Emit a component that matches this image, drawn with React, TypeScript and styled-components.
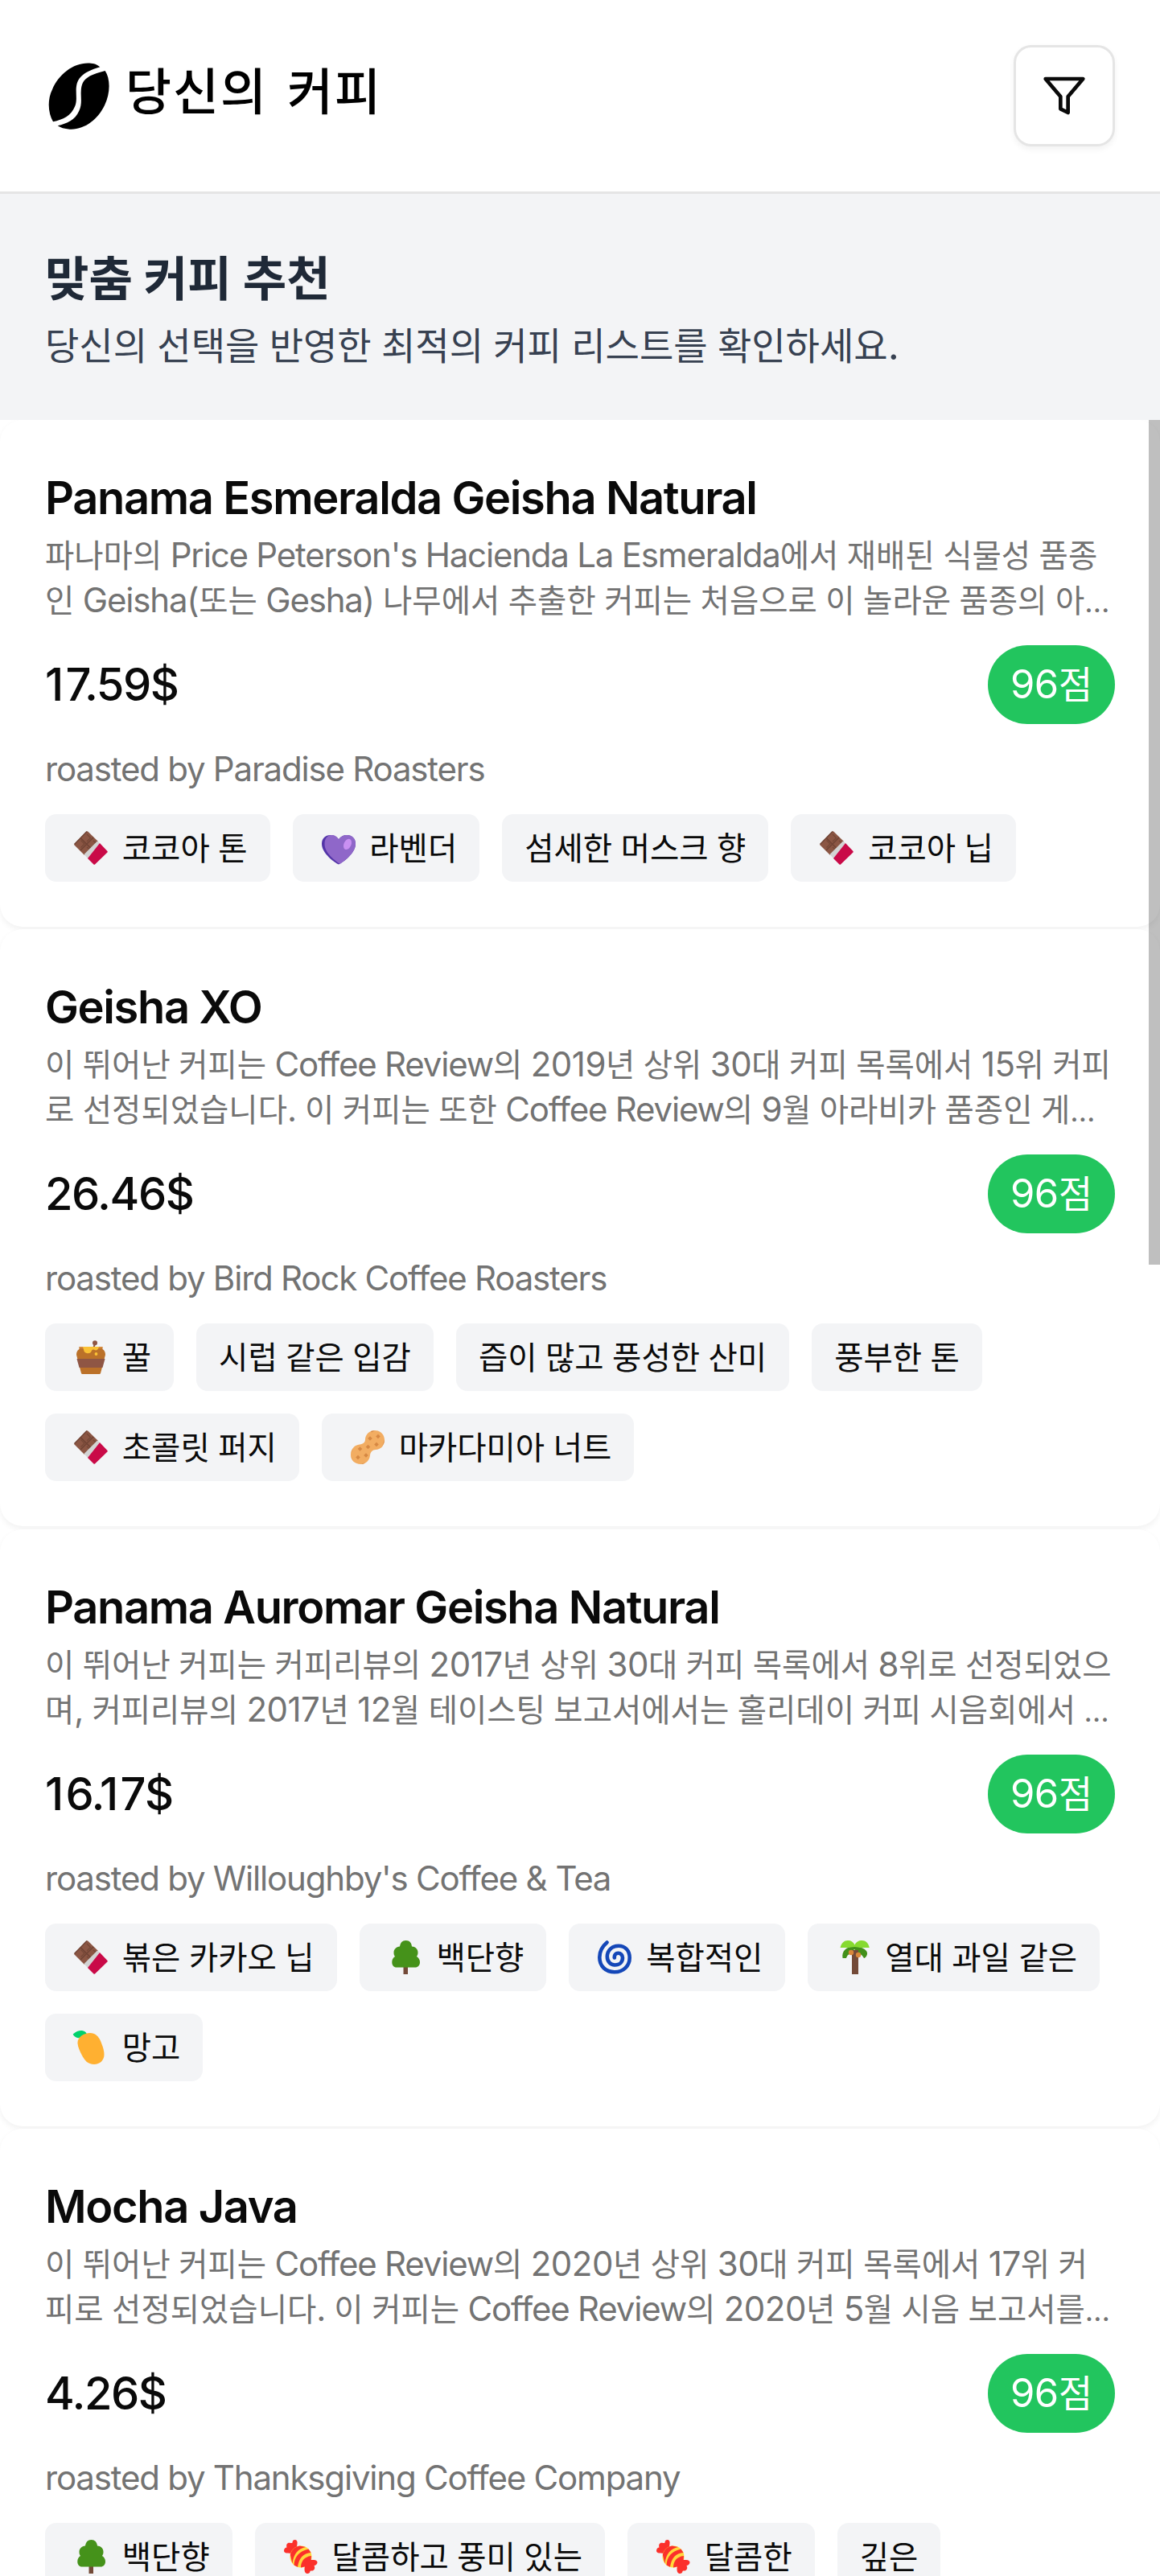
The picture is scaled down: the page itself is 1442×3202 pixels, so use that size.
import React from "react";
import styled, { createGlobalStyle } from "styled-components";

const LATIN = `Inter, "Noto Sans CJK KR", sans-serif`;
const HANGUL = `"Noto Sans CJK KR", Inter, sans-serif`;

const GlobalStyle = createGlobalStyle`
  *, *::before, *::after { box-sizing: border-box; }
  body {
    margin: 0;
    background: #ffffff;
    color: #0a0a0a;
    font-family: ${LATIN};
    -webkit-font-smoothing: antialiased;
  }
  h1, h2, p, ul { margin: 0; padding: 0; }
`;

const Screen = styled.div`
  display: flex;
  flex-direction: column;
  width: 1442px;
  height: 3202px;
  overflow: hidden;
  background: #ffffff;
`;

const Header = styled.header`
  display: flex;
  flex: none;
  align-items: center;
  justify-content: space-between;
  height: 241px;
  padding: 0 56px;
  border-bottom: 3px solid #e5e5e5;
`;

const Brand = styled.div`
  display: flex;
  align-items: center;
  gap: 20px;
  padding-left: 4px;
`;

const BeanMark = styled.svg`
  display: block;
  width: 76px;
  height: 83px;
`;

const Wordmark = styled.span`
  font-family: ${HANGUL};
  font-size: 62px;
  font-weight: 500;
  line-height: 84px;
  letter-spacing: 2px;
  word-spacing: 8px;
  color: #000000;
  white-space: nowrap;
  margin-top: -18px;
`;

const FilterButton = styled.button`
  display: flex;
  align-items: center;
  justify-content: center;
  width: 126px;
  height: 126px;
  padding: 0;
  border: 3px solid #e5e5e5;
  border-radius: 22px;
  background: #ffffff;
  box-shadow: 0 3.5px 7px rgba(0, 0, 0, 0.05);
  color: #0a0a0a;
`;

const Intro = styled.section`
  flex: none;
  height: 280.5px;
  padding: 56px;
  background: #f3f4f6;
`;

const IntroTitle = styled.h1`
  font-size: 63px;
  font-weight: 600;
  line-height: 96px;
  height: 98px;
  color: #1f2937;
  white-space: nowrap;
`;

const IntroText = styled.p`
  font-size: 49px;
  line-height: 70px;
  color: #374151;
  white-space: nowrap;
`;

const ListArea = styled.main`
  position: relative;
  flex: 1;
  min-height: 0;
  overflow: hidden;
`;

const CardList = styled.div`
  display: flex;
  flex-direction: column;
  gap: 3.5px;
`;

const ScrollThumb = styled.div`
  position: absolute;
  top: 0;
  right: 0;
  width: 14px;
  height: 1050px;
  background: rgba(0, 0, 0, 0.25);
`;

const Card = styled.article`
  display: flex;
  flex-direction: column;
  gap: 28px;
  padding: 56px;
  border-radius: 28px;
  background: #ffffff;
  box-shadow: 0 3.5px 7px rgba(0, 0, 0, 0.05);
`;

const CardName = styled.h2`
  font-size: 56px;
  font-weight: 600;
  line-height: 83px;
  height: 84px;
  letter-spacing: -0.0245em;
  white-space: nowrap;
`;

const Description = styled.p`
  font-size: 42px;
  line-height: 56px;
  color: #737373;
`;

const DescriptionLine = styled.span`
  display: block;
  height: 56px;
  white-space: nowrap;
`;

const PriceRow = styled.div`
  display: flex;
  align-items: center;
  justify-content: space-between;
  height: 98px;
`;

const PriceTag = styled.span`
  font-size: 56px;
  font-weight: 500;
  line-height: 84px;
  letter-spacing: -0.026em;
`;

const DigitOne = styled.span`
  margin-right: 0.065em;
`;

const Score = styled.span`
  display: flex;
  align-items: center;
  height: 98px;
  padding: 0 28px;
  border-radius: 49px;
  background: #22c55e;
  color: #ffffff;
  font-size: 49px;
  line-height: 70px;
`;

const Roaster = styled.p`
  height: 56px;
  font-size: 42px;
  line-height: 56px;
  color: #737373;
  white-space: nowrap;
`;

const Notes = styled.ul`
  display: flex;
  flex-wrap: wrap;
  gap: 28px;
  list-style: none;
`;

const Note = styled.li`
  display: flex;
  align-items: center;
  height: 84px;
  padding: 0 28px;
  border-radius: 14px;
  background: #f3f4f6;
  font-size: 42px;
  line-height: 56px;
  white-space: nowrap;
`;

const NoteIcon = styled.svg`
  display: block;
  width: 42px;
  height: 42px;
  margin: 0 17.800px 0 8px;
  overflow: visible;
`;

const Run = styled.span`
  letter-spacing: -0.012em;
  word-spacing: -0.02em;
`;

const HangulRun = styled.span`
  font-family: ${HANGUL};
  font-size: 0.94em;
  letter-spacing: 0;
  line-height: 1;
`;

const LatinRun = styled.span`
  letter-spacing: -0.028em;
`;

const Ellipsis = styled.span`
  font-size: 0.86em;
  line-height: 1;
`;

/* Hangul is set slightly smaller than Latin so both scripts sit at one optical size. */
function Text({ children }: { children: string }) {
  const parts = children.split(/([\uAC00-\uD7A3]+|[A-Za-z']+|…)/).filter(Boolean);
  return (
    <Run>
      {parts.map((part, i) => {
        if (/[\uAC00-\uD7A3]/.test(part)) return <HangulRun key={i}>{part}</HangulRun>;
        if (/[A-Za-z]/.test(part)) return <LatinRun key={i}>{part}</LatinRun>;
        if (part === "…") return <Ellipsis key={i}>{part}</Ellipsis>;
        return part;
      })}
    </Run>
  );
}

/* The figure 1 gets a little extra room so prices keep an even rhythm. */
function Price({ children }: { children: string }) {
  return (
    <PriceTag>
      {children.split(/(1)/).filter(Boolean).map((part, i) =>
        part === "1" ? <DigitOne key={i}>1</DigitOne> : part
      )}
    </PriceTag>
  );
}

type IconName =
  | "chocolate" | "heart" | "honey" | "peanut" | "tree"
  | "cyclone" | "palm" | "mango" | "candy";

const icons: Record<IconName, React.ReactNode> = {
  chocolate: (
    <>
      <path d="M16 0.4Q16.600 0 17.200 0.500L30 13 13 30 0.500 17.500Q0 16.800 0.500 16Z" fill="#8b5644" />
      <path d="M8 8.500 21.500 22M24 8 8 24M16 0.500 0.500 16.500" stroke="#6f4334" strokeWidth="1.500" fill="none" />
      <path d="M16 4 20.500 8.500 16 13M8.500 11.500 13 16 8.500 20.500M24 12 28 15.500 23 20M16 20 20.500 24 15 28" stroke="#744736" strokeWidth="1.200" fill="none" />
      <path d="M29 12.500 32 15 17.500 34.500 12.500 29Z" fill="#d3d3d3" />
      <path d="M32 15 41.500 25Q42 25.700 41.500 26.400L26 41.500Q25.300 42.200 24.500 41.500L17 34Z" fill="#c90a48" />
    </>
  ),
  heart: (
    <>
      <path d="M21 41.500C17 40 0 28 0 16 0 9 4.500 5 10.500 5 15 5 19 7 21 10.500 23 7 27 5 31.500 5 37.500 5 42 9 42 16 42 28 25 40 21 41.500Z" fill="#5334a8" />
      <path d="M22.500 41C18 37.500 3.500 28 3.500 16 3.500 9 7.500 5 12 5 16 5 19.500 7 21 10.500 23 7 27 5 31.500 5 37.500 5 42 9 42 16 42 27.500 27 38 22.500 41Z" fill="#8f67c9" />
      <ellipse cx="32" cy="16.300" rx="4.500" ry="7" transform="rotate(25 32 16.300)" fill="#c990f2" />
    </>
  ),
  honey: (
    <>
      <path d="M25 3.500H27.500L25.500 9H23.500Z" fill="#8f5644" />
      <circle cx="26" cy="3.300" r="3" fill="#8f5644" />
      <path d="M6.500 8H35.500V11C38 12.500 39 15 39 18L33 41Q32.700 42 31.500 42H10.500Q9.300 42 9 41L3 18C3 15 4 12.500 6.500 11Z" fill="#bb7129" />
      <path d="M6.500 8H35.500L34.500 10H7.500Z" fill="#d68a3c" />
      <path d="M3.500 23H38.500L35.500 34H6.500Z" fill="#8f5644" />
      <path d="M11 8H31C30.500 11 28.500 13.500 25.500 12 23.500 11 22.500 11.500 21.500 14 20 17 14 17 12.500 13.500Z" fill="#fac135" />
      <circle cx="27.500" cy="17" r="1.900" fill="#fac135" />
    </>
  ),
  peanut: (
    <>
      <path d="M30 0C37 0 42 5 42 12 42 19 37 24 31 24 27 24 24.500 27 24 31 23.500 37 19 42 12.500 42 5 42 0 37 0 30.500 0 23 5 18 11 17.500 15.500 17 18 15 18 11 18.500 5 23 0 30 0Z" fill="#f2ad62" />
      <path d="M24 7.200 26.800 10 24 12.800 21.200 10ZM34 4.700 36.800 7.500 34 10.300 31.200 7.500ZM32 14.700 34.800 17.500 32 20.300 29.200 17.500ZM21.500 17.700 24.300 20.500 21.500 23.300 18.700 20.500ZM11.500 20.200 14.300 23 11.500 25.800 8.700 23ZM19 28.200 21.800 31 19 33.800 16.200 31ZM9 30.700 11.800 33.500 9 36.300 6.200 33.500Z" fill="#d68843" />
      <path d="M25 1 30 0 26 2.500ZM41.500 15 39 20 42 11ZM1 34 3 38 0.500 32ZM13 42 18 40 15 41.900ZM1 26 3 22 0.500 28Z" fill="#d68843" />
    </>
  ),
  tree: (
    <>
      <rect x="18.500" y="30" width="5.500" height="12" fill="#734a38" />
      <path d="M21.500 0C26 0 28.500 3 29 7.500 34 8 36.500 11 36.500 15 36.500 17 36 18.500 35 20 37.500 21.500 39 24 39 27 39 31 36.500 33.500 33 33.500H10C6.500 33.500 4.300 31 4.300 27 4.300 24 5.500 21.500 8 20 6.800 18.500 6.500 17 6.500 15 6.500 11 9.500 8 14 7.500 14.500 3 17 0 21.500 0Z" fill="#45921a" />
    </>
  ),
  cyclone: (
    <path d="M11.500 2.500C5 8 2.300 14 2.300 21 2.300 32 10 39.300 21 39.300 32 39.300 39.700 31.500 39.700 21.500 39.700 12.500 34 6.700 26 6.700 17.500 6.700 11.800 12.500 11.800 20 11.800 26.500 16 30.500 21.500 30.500 27 30.500 31 27 31 21.500 31 18 28.500 15.700 25.500 15.700 22.500 15.700 20.500 18 20.800 21.500" fill="none" stroke="#1447b8" strokeWidth="4.600" strokeLinecap="round" />
  ),
  palm: (
    <>
      <path d="M7.500 22C6 13 12 7.500 22 7.500 33 7.500 39 13 38 17 37.500 19.500 35.500 22 34 22 33 20 31 17.500 27.500 16L22 11 17 17C14 17 13 19.500 12 22Z" fill="#42901a" />
      <path d="M4.500 9C6 3 9.500 0 14 0 18 0 21 2 22.500 5.500 24 2 27.500 0 31.500 0 36 0 39.500 3 40.800 9H30L22.500 8 14 9Z" fill="#86da30" />
      <path d="M19 12H27V42H19Z" fill="#734a38" />
      <circle cx="18" cy="15" r="3.200" fill="#d8873a" />
      <circle cx="27" cy="18" r="3.200" fill="#d8873a" />
    </>
  ),
  mango: (
    <>
      <path d="M-1.300 4.500C3 1 7 -0.500 11 0.300 14 1 16 3.500 16 5 13 8.500 8 10 4 9 1.500 8.500-0.500 6.500-1.300 4.500Z" fill="#00d16b" />
      <path d="M20 3C26 3 30.500 7 33 13 35.500 19 37.500 24.500 37.500 30 37.500 37 32 42 25 42 17 42 13 37 9.500 30 7 25 4.500 20 4.500 15 4.500 8 12 3 20 3Z" fill="#ffb031" />
    </>
  ),
  candy: (
    <>
      <path d="M0 13.500C0 11 2 9.500 3.500 9.500 2.500 6 4 3.500 7 3.800 9 4 10 4.500 10.500 3.500 10.500 1 12 0 13.500 0 16 0 17 2 16.500 5L16 9 9 17C6.500 16.500 3 17 1.500 16 .5 15.500 0 14.500 0 13.500Z" fill="#fb302b" />
      <circle cx="21" cy="21" r="13.500" fill="#ffd83c" />
      <path d="M7.800 18.500C10 12 14 8.500 19.500 7.600L27 9C18 11 12 17 10.500 29.500ZM12.500 31.500C13 21 19 14 30.500 11.500L33.500 16C24 16.500 18.500 23 17 33.800ZM21 34.500C21 27 25 21 34 20L33.500 26 27 33Z" fill="#fb302b" />
      <path d="M26.500 27.500C29 25 33 25 37 25 40 25 41.500 26.500 41.500 28 41.500 30 39.500 32 37.500 32 39 35 38 37 36.500 38 35 39 33 38 32.500 39 32.500 41 30.500 42.500 28.500 42 26 41.500 25.500 39 25.500 36Z" fill="#fb302b" />
    </>
  ),
};

interface Flavor {
  label: string;
  icon?: IconName;
}

interface Coffee {
  name: string;
  description: string[];
  price: string;
  score: string;
  roaster: string;
  notes: Flavor[];
}

const coffees: Coffee[] = [
  {
    name: "Panama Esmeralda Geisha Natural",
    description: [
      "파나마의 Price Peterson's Hacienda La Esmeralda에서 재배된 식물성 품종",
      "인 Geisha(또는 Gesha) 나무에서 추출한 커피는 처음으로 이 놀라운 품종의 아…",
    ],
    price: "17.59$",
    score: "96점",
    roaster: "Paradise Roasters",
    notes: [
      { label: "코코아 톤", icon: "chocolate" },
      { label: "라벤더", icon: "heart" },
      { label: "섬세한 머스크 향" },
      { label: "코코아 닙", icon: "chocolate" },
    ],
  },
  {
    name: "Geisha XO",
    description: [
      "이 뛰어난 커피는 Coffee Review의 2019년 상위 30대 커피 목록에서 15위 커피",
      "로 선정되었습니다. 이 커피는 또한 Coffee Review의 9월 아라비카 품종인 게…",
    ],
    price: "26.46$",
    score: "96점",
    roaster: "Bird Rock Coffee Roasters",
    notes: [
      { label: "꿀", icon: "honey" },
      { label: "시럽 같은 입감" },
      { label: "즙이 많고 풍성한 산미" },
      { label: "풍부한 톤" },
      { label: "초콜릿 퍼지", icon: "chocolate" },
      { label: "마카다미아 너트", icon: "peanut" },
    ],
  },
  {
    name: "Panama Auromar Geisha Natural",
    description: [
      "이 뛰어난 커피는 커피리뷰의 2017년 상위 30대 커피 목록에서 8위로 선정되었으",
      "며, 커피리뷰의 2017년 12월 테이스팅 보고서에서는 홀리데이 커피 시음회에서 …",
    ],
    price: "16.17$",
    score: "96점",
    roaster: "Willoughby's Coffee & Tea",
    notes: [
      { label: "볶은 카카오 닙", icon: "chocolate" },
      { label: "백단향", icon: "tree" },
      { label: "복합적인", icon: "cyclone" },
      { label: "열대 과일 같은", icon: "palm" },
      { label: "망고", icon: "mango" },
    ],
  },
  {
    name: "Mocha Java",
    description: [
      "이 뛰어난 커피는 Coffee Review의 2020년 상위 30대 커피 목록에서 17위 커",
      "피로 선정되었습니다. 이 커피는 Coffee Review의 2020년 5월 시음 보고서를…",
    ],
    price: "4.26$",
    score: "96점",
    roaster: "Thanksgiving Coffee Company",
    notes: [
      { label: "백단향", icon: "tree" },
      { label: "달콤하고 풍미 있는", icon: "candy" },
      { label: "달콤한", icon: "candy" },
      { label: "깊은" },
    ],
  },
];

function CoffeeCard({ coffee }: { coffee: Coffee }) {
  return (
    <Card>
      <div>
        <CardName>{coffee.name}</CardName>
        <Description>
          {coffee.description.map((line) => (
            <DescriptionLine key={line}>
              <Text>{line}</Text>
            </DescriptionLine>
          ))}
        </Description>
      </div>
      <PriceRow>
        <Price>{coffee.price}</Price>
        <Score>
          <Text>{coffee.score}</Text>
        </Score>
      </PriceRow>
      <Roaster>
        <Text>{`roasted by ${coffee.roaster}`}</Text>
      </Roaster>
      <Notes>
        {coffee.notes.map((note) => (
          <Note key={note.label}>
            {note.icon && <NoteIcon viewBox="0 0 42 42">{icons[note.icon]}</NoteIcon>}
            <Text>{note.label}</Text>
          </Note>
        ))}
      </Notes>
    </Card>
  );
}

export default function App() {
  return (
    <>
      <GlobalStyle />
      <Screen>
        <Header>
          <Brand>
            <BeanMark viewBox="30 50 228 250" preserveAspectRatio="none">
              <path d="M48 271C30 240 25 190 45 150 70 90 130 45 190 52 205 53 218 60 223 66 190 75 165 88 150 104 137 118 134 135 134 155 134 175 137 195 130 212 115 250 85 262 48 271Z" />
              <path d="M242 80C262 110 262 165 240 210 215 262 165 302 110 299 90 298 75 293 65 286 100 277 130 265 145 230 157 205 151 180 152 160 153 130 160 115 185 100 200 91 220 87 242 80Z" />
            </BeanMark>
            <Wordmark>당신의 커피</Wordmark>
          </Brand>
          <FilterButton aria-label="필터">
            <svg width="56" height="56" viewBox="0 0 24 24" fill="none" stroke="currentColor" strokeWidth="2" strokeLinecap="round" strokeLinejoin="round">
              <polygon points="22 3 2 3 10 12.46 10 19 14 21 14 12.46 22 3" />
            </svg>
          </FilterButton>
        </Header>
        <Intro>
          <IntroTitle>
            <Text>맞춤 커피 추천</Text>
          </IntroTitle>
          <IntroText>
            <Text>당신의 선택을 반영한 최적의 커피 리스트를 확인하세요.</Text>
          </IntroText>
        </Intro>
        <ListArea>
          <CardList>
            {coffees.map((coffee) => (
              <CoffeeCard key={coffee.name} coffee={coffee} />
            ))}
          </CardList>
          <ScrollThumb />
        </ListArea>
      </Screen>
    </>
  );
}
